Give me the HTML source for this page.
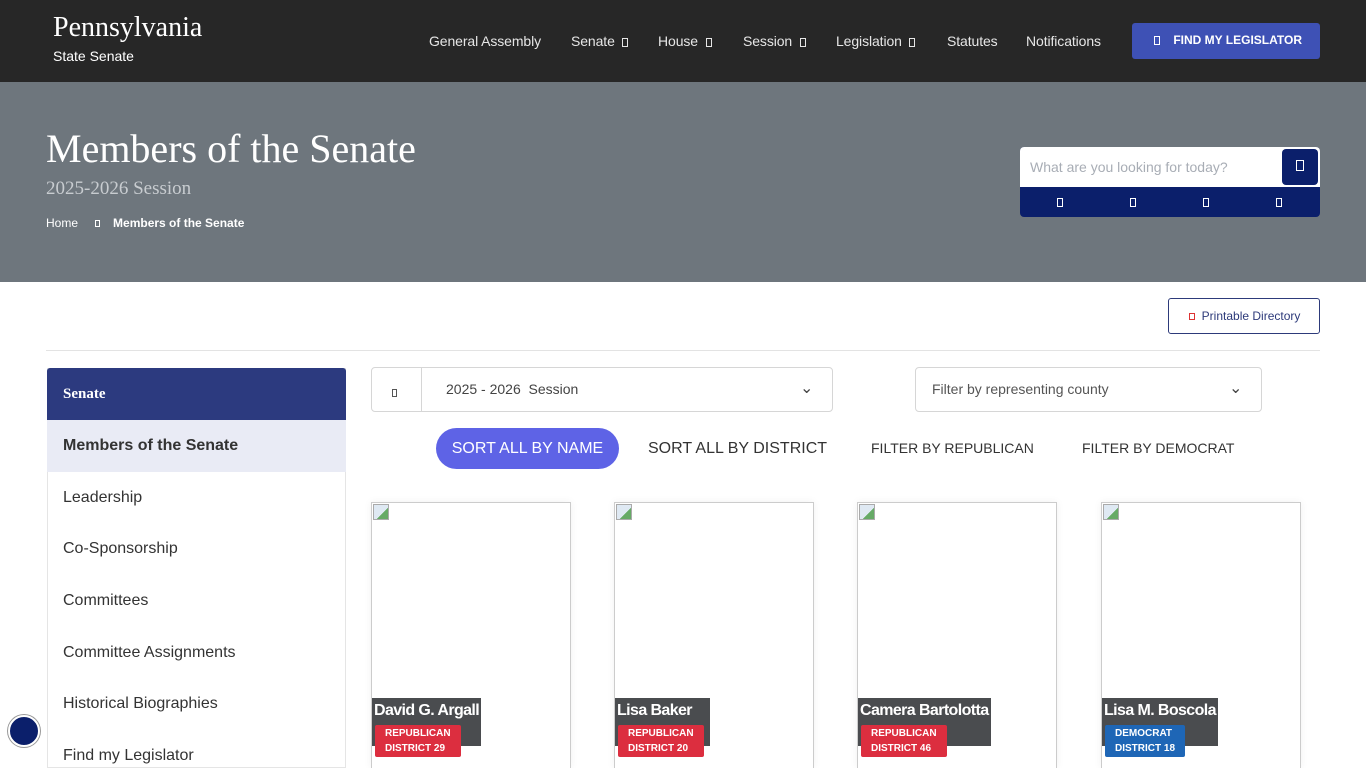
<!DOCTYPE html><html style="overflow:hidden;height:768px"><head><style>
*{box-sizing:border-box;margin:0;padding:0}
body{width:1366px;height:768px;overflow:hidden;background:#fff;font-family:"Liberation Sans",sans-serif;position:relative}
.a{position:absolute}
.bx{display:inline-block;width:6px;height:9px;border:1px solid currentColor;vertical-align:middle}
.nav span{position:absolute;top:33px;color:#e6e6e6;font-size:14px;letter-spacing:-.1px}
.side div{position:absolute;left:47px;width:299px;height:52px;padding-left:16px;line-height:52px;font-size:16px;color:#333}
.card{position:absolute;top:502px;width:200px;height:266px;border:1px solid #ccc;border-bottom:none;background:#fff;box-shadow:0 0 8px rgba(0,0,0,.06)}
.nm{position:absolute;left:0;top:195px;background:#4a4c4f;color:#fff;font-weight:bold;font-size:16px;letter-spacing:-.6px;padding:4px 2px 0 2px;height:48px}
.pt{position:absolute;left:3px;top:222px;color:#fff;font-weight:bold;font-size:10px;line-height:15px;padding:1px 10px 1px 10px;border-radius:2px}
.img{position:absolute;left:1px;top:1px;width:16px;height:16px;border:1px solid #aaa;background:linear-gradient(135deg,#dfe9f3 60%,#6a6 60%)}
</style></head><body>
<div class="a" style="left:0;top:0;width:1366px;height:82px;background:#272727"></div>
<div class="a" style="left:53px;top:12px;color:#fff;font-family:'Liberation Serif',serif;font-size:28px">Pennsylvania</div>
<div class="a" style="left:53px;top:48px;color:#fff;font-size:14px">State Senate</div>
<div class="nav">
<span style="left:429px">General Assembly</span>
<span style="left:571px">Senate &nbsp;<i class="bx"></i></span>
<span style="left:658px">House &nbsp;<i class="bx"></i></span>
<span style="left:743px">Session &nbsp;<i class="bx"></i></span>
<span style="left:836px">Legislation &nbsp;<i class="bx"></i></span>
<span style="left:947px">Statutes</span>
<span style="left:1026px">Notifications</span>
</div>
<div class="a" style="left:1132px;top:23px;width:188px;height:36px;background:#3e51b5;border-radius:3px;color:#fff;font-size:12px;font-weight:bold;line-height:34px;padding-left:22px"><i class="bx"></i>&nbsp;&nbsp;&nbsp; FIND MY LEGISLATOR</div>
<div class="a" style="left:0;top:82px;width:1366px;height:200px;background:#6e767d"></div>
<div class="a" style="left:46px;top:125px;color:#fff;font-family:'Liberation Serif',serif;font-size:40px">Members of the Senate</div>
<div class="a" style="left:46px;top:178px;color:#c8ccd0;font-family:'Liberation Serif',serif;font-size:19px">2025-2026 Session</div>
<div class="a" style="left:46px;top:216px;color:#fff;font-size:12px;font-weight:bold"><span style="font-weight:normal">Home</span> &nbsp;&nbsp;&nbsp; <i class="bx" style="width:5px;height:7px"></i> &nbsp;&nbsp; Members of the Senate</div>
<div class="a" style="left:1020px;top:147px;width:300px;height:70px;background:#0b1f6b;border-radius:4px"></div>
<div class="a" style="left:1020px;top:147px;width:300px;height:40px;background:#fff;border-radius:4px 4px 0 0;color:#a8adb5;font-size:14px;line-height:40px;padding-left:10px">What are you looking for today?</div>
<div class="a" style="left:1282px;top:149px;width:36px;height:36px;background:#0b1f6b;border-radius:4px;color:#fff;text-align:center;line-height:34px"><i class="bx" style="width:8px;height:11px"></i></div>
<div class="a" style="left:1057px;top:194px;color:#fff"><i class="bx"></i></div>
<div class="a" style="left:1130px;top:194px;color:#fff"><i class="bx"></i></div>
<div class="a" style="left:1203px;top:194px;color:#fff"><i class="bx"></i></div>
<div class="a" style="left:1276px;top:194px;color:#fff"><i class="bx"></i></div>
<div class="a" style="left:1168px;top:298px;width:152px;height:36px;border:1px solid #2d3a7a;border-radius:3px;color:#2d3a7a;font-size:12px;line-height:34px;padding-left:20px"><i class="bx" style="color:#d33;width:6px;height:7px"></i>&nbsp; Printable Directory</div>
<div class="a" style="left:46px;top:350px;width:1274px;height:1px;background:#e3e3e3"></div>
<div class="a" style="left:47px;top:368px;width:299px;height:400px;border:1px solid #e5e5e5"></div>
<div class="a" style="left:47px;top:368px;width:299px;height:52px;background:#2c3a7f;border-radius:3px 3px 0 0;color:#fff;font-family:'Liberation Serif',serif;font-weight:bold;font-size:15px;line-height:52px;padding-left:16px">Senate</div>
<div class="side">
<div style="top:420px;background:#e9ebf5;font-weight:bold">Members of the Senate</div>
<div style="top:472px">Leadership</div>
<div style="top:523px">Co-Sponsorship</div>
<div style="top:575px">Committees</div>
<div style="top:627px">Committee Assignments</div>
<div style="top:678px">Historical Biographies</div>
<div style="top:730px">Find my Legislator</div>
</div>
<div class="a" style="left:371px;top:367px;width:462px;height:45px;border:1px solid #d6d6d6;border-radius:4px"></div>
<div class="a" style="left:421px;top:368px;width:1px;height:43px;background:#d6d6d6"></div>
<div class="a" style="left:392px;top:384px;color:#555"><i class="bx" style="width:5px;height:8px"></i></div>
<div class="a" style="left:446px;top:381px;color:#444;font-size:14px">2025 - 2026&nbsp; Session</div>
<div class="a" style="left:800px;top:378px;color:#444;font-size:16px">&#8964;</div>
<div class="a" style="left:915px;top:367px;width:347px;height:45px;border:1px solid #d6d6d6;border-radius:4px;color:#555;font-size:14px;line-height:43px;padding-left:16px">Filter by representing county</div>
<div class="a" style="left:1229px;top:378px;color:#444;font-size:16px">&#8964;</div>
<div class="a" style="left:436px;top:428px;width:183px;height:41px;background:#5e63e6;border-radius:21px;color:#fff;font-size:16px;line-height:41px;text-align:center">SORT ALL BY NAME</div>
<div class="a" style="left:648px;top:440px;color:#333;font-size:16px">SORT ALL BY DISTRICT</div>
<div class="a" style="left:871px;top:440px;color:#333;font-size:14px">FILTER BY REPUBLICAN</div>
<div class="a" style="left:1082px;top:440px;color:#333;font-size:14px">FILTER BY DEMOCRAT</div>
<div class="card" style="left:371px"><div class="img"></div><div class="nm">David G. Argall</div><div class="pt" style="background:#dc2e3f">REPUBLICAN<br>DISTRICT 29</div></div>
<div class="card" style="left:614px"><div class="img"></div><div class="nm" style="width:95px">Lisa Baker</div><div class="pt" style="background:#dc2e3f">REPUBLICAN<br>DISTRICT 20</div></div>
<div class="card" style="left:857px"><div class="img"></div><div class="nm">Camera Bartolotta</div><div class="pt" style="background:#dc2e3f">REPUBLICAN<br>DISTRICT 46</div></div>
<div class="card" style="left:1101px"><div class="img"></div><div class="nm">Lisa M. Boscola</div><div class="pt" style="background:#1e66b6">DEMOCRAT<br>DISTRICT 18</div></div>
<div class="a" style="left:8px;top:715px;width:32px;height:32px;border-radius:50%;background:#0b1f6b;border:2px solid #fff;box-shadow:0 0 0 1px #999"></div>
</body></html>
